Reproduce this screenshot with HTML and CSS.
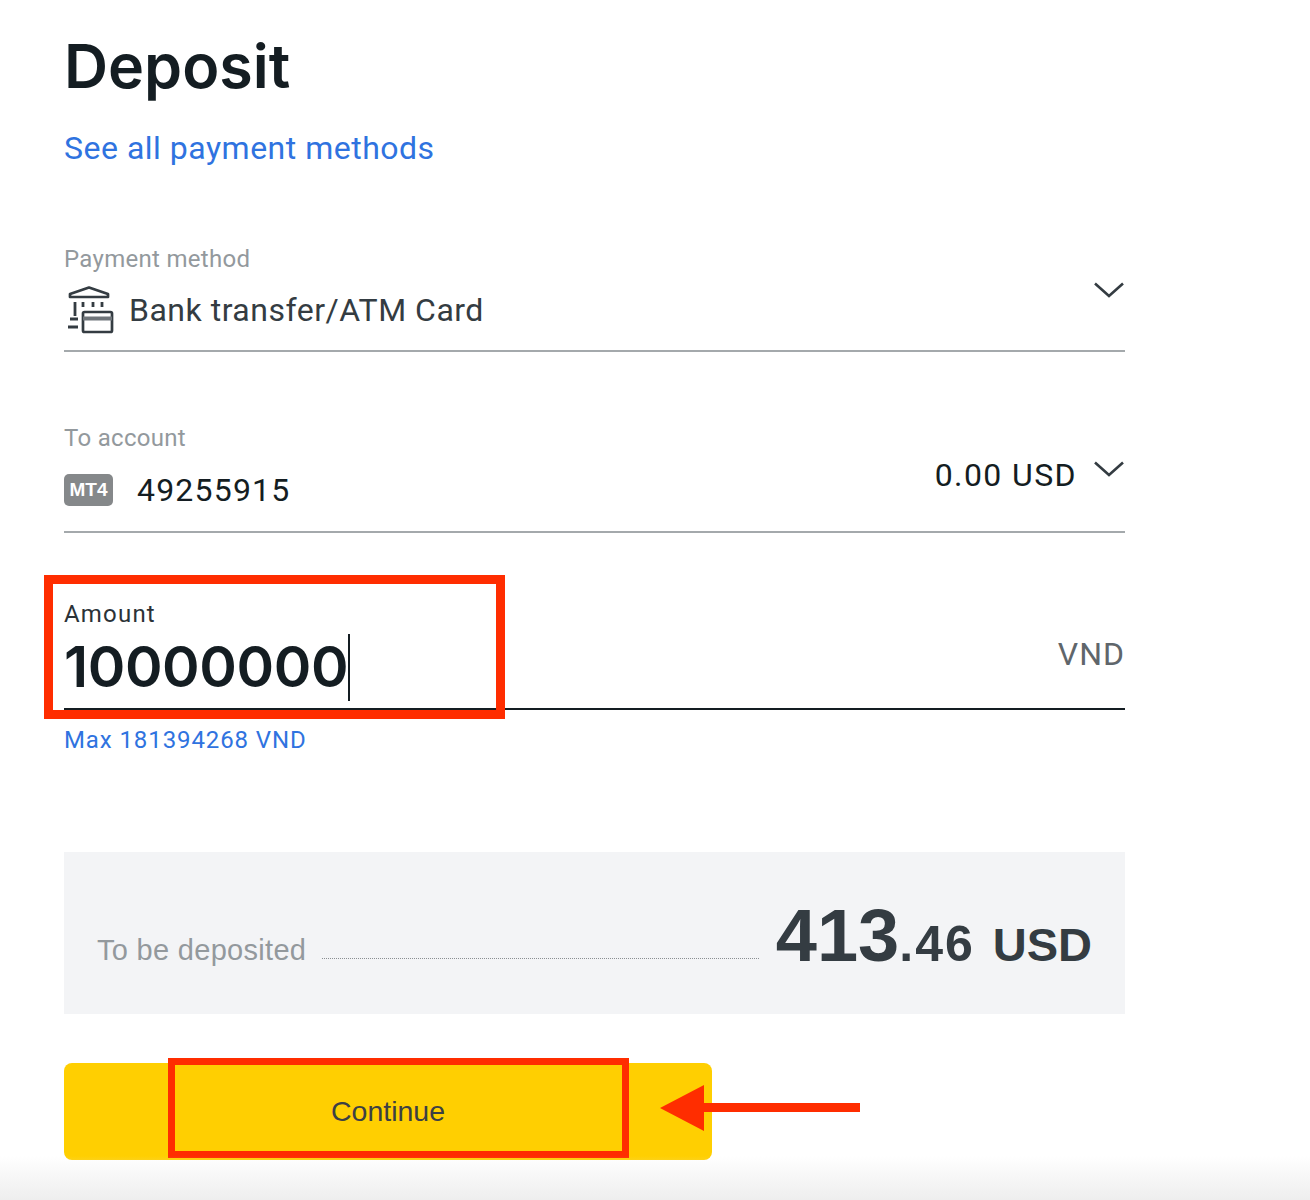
FILE: index.html
```html
<!DOCTYPE html>
<html lang="en">
<head>
    <meta charset="UTF-8">
    <meta name="viewport" content="width=device-width, initial-scale=1.0">
    <title>Deposit</title>
    <link rel="stylesheet" href="styles.css">
</head>
<body>
    <div class="page">
        <h1>Deposit</h1>
        <a href="#" class="all-methods">See all payment methods</a>

        <div class="field field-method">
            <div class="field-label">Payment method</div>
            <div class="field-row">
                <div class="field-value">
                    <svg class="bank-icon" width="50" height="48" viewBox="0 0 50 48" fill="none" stroke="#343c42" stroke-width="2.7">
                        <path d="M6 11V8L25 1.5L44 8V11H6Z" stroke-linejoin="round"/>
                        <path d="M11 16V30M19 16V21M29 16V21M38 16V21" stroke-width="2.8"/>
                        <path d="M6 33H14M4 41H14" stroke-width="2.8"/>
                        <rect x="19" y="26" width="29" height="20" rx="1.5"/>
                        <path d="M19 32.5H48" stroke="#6f757a" stroke-width="4"/>
                    </svg>
                    <span>Bank transfer/ATM Card</span>
                </div>
                <svg class="chevron" width="30" height="16" viewBox="0 0 30 16" fill="none" stroke="#343c42" stroke-width="2.6"><path d="M1 1.5L15 14L29 1.5"/></svg>
            </div>
        </div>

        <div class="field field-account">
            <div class="field-label">To account</div>
            <div class="field-row">
                <div class="field-value account">
                    <span class="badge">MT4</span>
                    <span>49255915</span>
                </div>
                <div class="balance">
                    <span>0.00 USD</span>
                    <svg class="chevron" width="30" height="16" viewBox="0 0 30 16" fill="none" stroke="#343c42" stroke-width="2.6"><path d="M1 1.5L15 14L29 1.5"/></svg>
                </div>
            </div>
        </div>

        <div class="field field-amount">
            <div class="field-label">Amount</div>
            <div class="field-row">
                <div class="amount-value">10000000<span class="caret"></span></div>
                <span class="currency">VND</span>
            </div>
            <div class="mark mark-amount"></div>
        </div>
        <a href="#" class="max-link">Max 181394268 VND</a>

        <div class="summary">
            <span class="summary-label">To be deposited</span>
            <span class="dots"></span>
            <span class="summary-total"><b>413</b>.46<span class="summary-cur">USD</span></span>
        </div>

        <div class="actions">
            <button type="button" class="btn-continue">Continue</button>
            <div class="mark mark-continue"></div>
            <svg class="arrow" width="202" height="46" viewBox="0 0 202 46"><path d="M2 23L46 0V18H202V27H46V46Z" fill="#ff2d00"/></svg>
        </div>
        <div class="bottom-fade"></div>
    </div>
</body>
</html>
```

FILE: styles.css
```css
* {
    box-sizing: border-box;
    margin: 0;
    padding: 0;
}

body {
    font-family: Inter, "Liberation Sans", sans-serif;
    background: white;
    color: #141d22;
}

.page {
    position: relative;
    width: 1310px;
    height: 1200px;
    padding: 28px 185px 0 64px;
    overflow: hidden;
}

h1 {
    font-size: 61px;
    line-height: 76px;
    font-weight: 600;
}

.all-methods {
    display: block;
    margin-top: 24px;
    font-size: 32px;
    line-height: 40px;
    color: #2f73e0;
    text-decoration: none;
    font-family: Roboto, sans-serif;
    letter-spacing: 0.5px;
}

.field {
    position: relative;
    border-bottom: 2px solid #a4a9ac;
}

.field-method {
    margin-top: 76px;
    height: 108px;
}

.field-account {
    margin-top: 71px;
    height: 110px;
}

.field-amount {
    margin-top: 66px;
    height: 111px;
    border-bottom-color: #141d22;
}

.field-label {
    font-size: 24px;
    line-height: 30px;
    color: #93999d;
    font-family: Roboto, sans-serif;
    letter-spacing: 0.3px;
}

.field-amount .field-label {
    color: #2b3237;
    letter-spacing: 1.2px;
}

.field-row {
    display: flex;
    justify-content: space-between;
    align-items: flex-start;
}

.field-value {
    display: flex;
    align-items: center;
    gap: 15px;
    font-family: Roboto, sans-serif;
    font-size: 32px;
    line-height: 46px;
    letter-spacing: 0.5px;
    color: #343c42;
    margin-top: 12px;
}

.bank-icon {
    flex-shrink: 0;
}

.chevron {
    margin: 8px 1px 0 0;
}

.account {
    gap: 24px;
    color: #141d22;
    margin-top: 14px;
    letter-spacing: 1.2px;
}

.badge {
    background: #85888a;
    color: white;
    font-size: 19px;
    font-weight: 700;
    line-height: 32px;
    width: 49px;
    text-align: center;
    border-radius: 5px;
    letter-spacing: 0;
    font-family: "Liberation Sans", sans-serif;
}

.balance {
    display: flex;
    align-items: flex-start;
    gap: 17px;
    font-family: Roboto, sans-serif;
    font-size: 32px;
    line-height: 44px;
    letter-spacing: 1.4px;
}

.amount-value {
    display: flex;
    align-items: center;
    margin-top: 1px;
    font-size: 57px;
    line-height: 74px;
    font-weight: 600;
    letter-spacing: -0.4px;
}

.caret {
    width: 2px;
    height: 67px;
    background: #141d22;
}

.currency {
    margin-top: 3px;
    color: #5f666b;
    font-family: Roboto, sans-serif;
    font-size: 32px;
    line-height: 44px;
    letter-spacing: 1px;
}

.max-link {
    display: block;
    margin-top: 16px;
    font-family: Roboto, sans-serif;
    font-size: 24px;
    line-height: 28px;
    letter-spacing: 0.9px;
    color: #2f73e0;
    text-decoration: none;
}

.summary {
    display: flex;
    align-items: flex-end;
    margin-top: 98px;
    height: 162px;
    padding: 0 33px 42px;
    background: #f3f4f6;
    font-family: "Liberation Sans", sans-serif;
}

.summary-label {
    margin-bottom: 5px;
    font-size: 29px;
    line-height: 34px;
    letter-spacing: 0.3px;
    color: #93999d;
}

.dots {
    flex: 1;
    margin: 0 17px 13px 16px;
    border-bottom: 1px dotted #8a8f92;
}

.summary-total {
    font-size: 50px;
    line-height: 54px;
    font-weight: 700;
    letter-spacing: 2px;
    color: #343c42;
}

.summary-total b {
    font-size: 74px;
    line-height: 54px;
    letter-spacing: 0;
}

.summary-cur {
    margin-left: 18px;
    font-size: 47px;
    letter-spacing: 0;
}

.actions {
    position: relative;
    margin-top: 49px;
}

.btn-continue {
    display: block;
    width: 648px;
    height: 97px;
    border: none;
    border-radius: 8px;
    background: #ffcf01;
    color: #3c4044;
    font-family: "Liberation Sans", sans-serif;
    font-size: 28.5px;
    cursor: pointer;
}

.mark {
    position: absolute;
    border: 7px solid #ff2d00;
}

.mark-amount {
    left: -20px;
    top: -24px;
    width: 461px;
    height: 144px;
    border-width: 9px;
}

.mark-continue {
    left: 104px;
    top: -5px;
    width: 461px;
    height: 100px;
}

.arrow {
    position: absolute;
    left: 594px;
    top: 22px;
}

.bottom-fade {
    position: absolute;
    left: 0;
    right: 0;
    bottom: 0;
    height: 44px;
    background: linear-gradient(to bottom, rgba(238, 238, 238, 0), #eeeeee);
}
```
